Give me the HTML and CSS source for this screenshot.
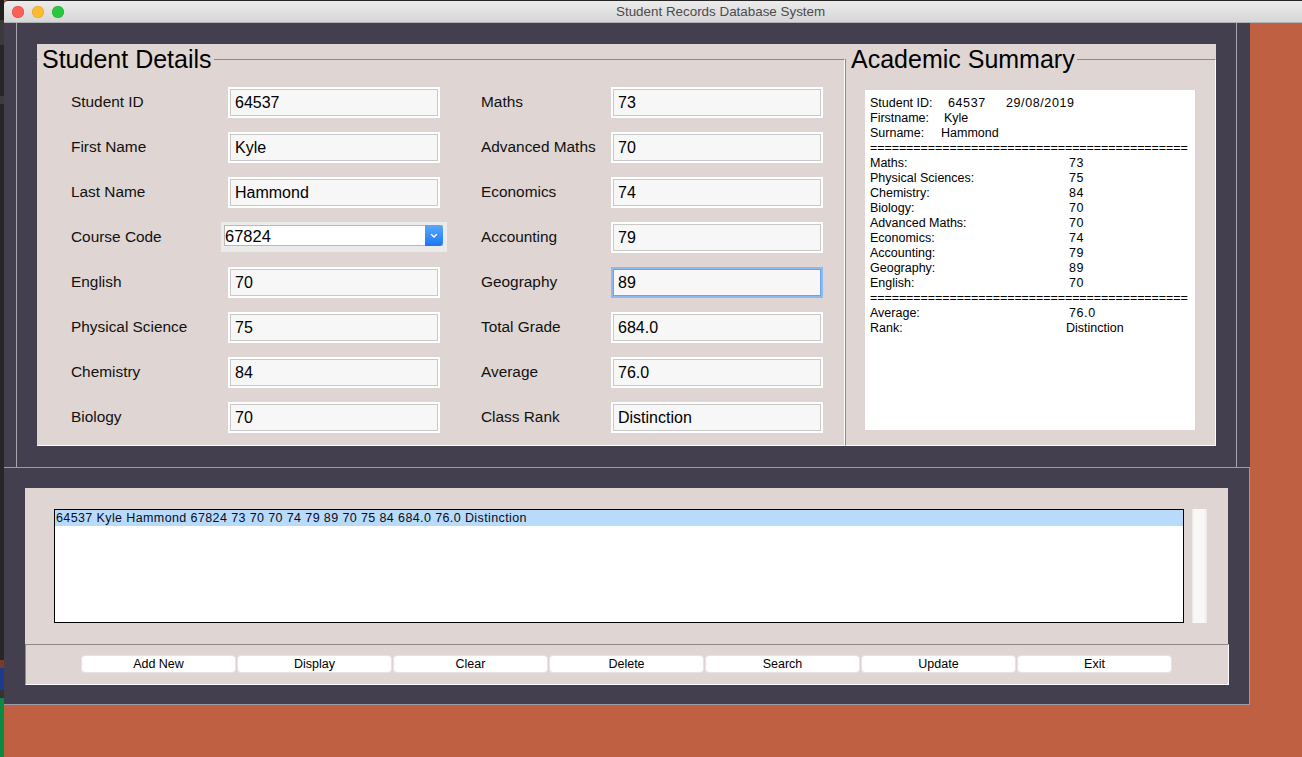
FILE: index.html
```html
<!DOCTYPE html>
<html>
<head>
<meta charset="utf-8">
<title>Student Records Database System</title>
<link rel="stylesheet" href="styles.css">
</head>
<body>
<div class="screen">
  <div class="desk-strip"></div>
  <div class="app">
    <div class="titlebar">
      <div class="lights">
        <span class="light red"></span>
        <span class="light yellow"></span>
        <span class="light green"></span>
      </div>
      <div class="title">Student Records Database System</div>
    </div>
    <div class="root">
      <div class="main">
        <div class="top-frame">
          <div class="top-panel">
            <fieldset class="lf details">
              <legend>Student Details</legend>
              <div class="form-grid">
                <div class="label">Student ID</div>
                <div class="entry">64537</div>
                <div class="label r-label">Maths</div>
                <div class="entry">73</div>

                <div class="label">First Name</div>
                <div class="entry">Kyle</div>
                <div class="label r-label">Advanced Maths</div>
                <div class="entry">70</div>

                <div class="label">Last Name</div>
                <div class="entry">Hammond</div>
                <div class="label r-label">Economics</div>
                <div class="entry">74</div>

                <div class="label">Course Code</div>
                <div class="combo">
                  <div class="combo-field">
                    <span class="combo-text">67824</span>
                    <span class="combo-btn"><svg width="10" height="8" viewBox="0 0 10 8"><polyline points="2.5,2.5 5,5 7.5,2.5" fill="none" stroke="#fff" stroke-width="1.4" stroke-linecap="round" stroke-linejoin="round"/></svg></span>
                  </div>
                </div>
                <div class="label r-label">Accounting</div>
                <div class="entry">79</div>

                <div class="label">English</div>
                <div class="entry">70</div>
                <div class="label r-label">Geography</div>
                <div class="entry focus">89</div>

                <div class="label">Physical Science</div>
                <div class="entry">75</div>
                <div class="label r-label">Total Grade</div>
                <div class="entry">684.0</div>

                <div class="label">Chemistry</div>
                <div class="entry">84</div>
                <div class="label r-label">Average</div>
                <div class="entry">76.0</div>

                <div class="label">Biology</div>
                <div class="entry">70</div>
                <div class="label r-label">Class Rank</div>
                <div class="entry">Distinction</div>
              </div>
            </fieldset>
            <fieldset class="lf summary">
              <legend>Academic Summary</legend>
              <div class="summary-box">
                <div class="s-line"><span class="k-id">Student ID:</span><span class="k-mid num">64537</span><span class="num">29/08/2019</span></div>
                <div class="s-line"><span class="k-fn">Firstname:</span>Kyle</div>
                <div class="s-line"><span class="k-sn">Surname:</span>Hammond</div>
                <div class="s-sep">============================================</div>
                <div class="s-row"><span class="s-k">Maths:</span><span class="num">73</span></div>
                <div class="s-row"><span class="s-k">Physical Sciences:</span><span class="num">75</span></div>
                <div class="s-row"><span class="s-k">Chemistry:</span><span class="num">84</span></div>
                <div class="s-row"><span class="s-k">Biology:</span><span class="num">70</span></div>
                <div class="s-row"><span class="s-k">Advanced Maths:</span><span class="num">70</span></div>
                <div class="s-row"><span class="s-k">Economics:</span><span class="num">74</span></div>
                <div class="s-row"><span class="s-k">Accounting:</span><span class="num">79</span></div>
                <div class="s-row"><span class="s-k">Geography:</span><span class="num">89</span></div>
                <div class="s-row"><span class="s-k">English:</span><span class="num">70</span></div>
                <div class="s-sep">============================================</div>
                <div class="s-row"><span class="s-k">Average:</span><span class="num">76.0</span></div>
                <div class="s-row"><span class="s-k">Rank:</span><span class="s-shift">Distinction</span></div>
              </div>
            </fieldset>
          </div>
        </div>
        <div class="bottom-frame">
          <div class="list-panel">
            <div class="listbox">
              <div class="list-row selected">64537 Kyle Hammond 67824 73 70 70 74 79 89 70 75 84 684.0 76.0 Distinction</div>
            </div>
            <div class="scrollbar"></div>
          </div>
          <div class="button-bar">
            <button class="btn">Add New</button>
            <button class="btn">Display</button>
            <button class="btn">Clear</button>
            <button class="btn">Delete</button>
            <button class="btn">Search</button>
            <button class="btn">Update</button>
            <button class="btn">Exit</button>
          </div>
        </div>
      </div>
    </div>
  </div>
</div>
</body>
</html>
```

FILE: styles.css
```css
* { box-sizing: border-box; }

html, body {
  margin: 0;
  padding: 0;
}

body {
  width: 1302px;
  height: 757px;
  overflow: hidden;
  background: #c06042;
  font-family: "Liberation Sans", Arial, Helvetica, sans-serif;
  color: #000;
}

.screen {
  display: flex;
  height: 757px;
}

.desk-strip {
  width: 4px;
  flex: none;
  background: linear-gradient(to bottom,
    #1f1f1f 0, #1f1f1f 20px,
    #3a3a3a 20px, #3a3a3a 45px,
    #262626 45px, #262626 96px,
    #3c3c3c 96px, #3c3c3c 104px,
    #262626 104px, #262626 660px,
    #7a3b2a 660px, #7a3b2a 668px,
    #1d3a8c 668px, #1d3a8c 690px,
    #333 690px, #333 698px,
    #0b8a43 698px, #0b8a43 757px);
}

.app {
  flex: 1;
  display: flex;
  flex-direction: column;
  min-width: 0;
}

/* ---------- title bar ---------- */
.titlebar {
  height: 23px;
  flex: none;
  display: flex;
  align-items: center;
  border-top: 1px solid #262626;
  border-bottom: 1px solid #b2b2b2;
  border-top-left-radius: 4px;
  background: linear-gradient(#ececec, #d6d6d6);
}

.lights {
  display: flex;
  gap: 8px;
  padding-left: 8px;
}

.light {
  width: 12px;
  height: 12px;
  border-radius: 50%;
}
.light.red { background: #fc5f57; box-shadow: inset 0 0 0 0.5px #df4744; }
.light.yellow { background: #fdbc2e; box-shadow: inset 0 0 0 0.5px #de9f34; }
.light.green { background: #29c73f; box-shadow: inset 0 0 0 0.5px #27aa35; }

.title {
  margin-left: 552px;
  font-size: 13.4px;
  color: #4b4b4b;
  white-space: nowrap;
}

/* ---------- main window ---------- */
.root {
  flex: 1;
  background: #c06042;
}

.main {
  width: 1246px;
  height: 682px;
  background: #433f4e;
  display: flex;
  flex-direction: column;
}

.top-frame {
  flex: none;
  margin-left: 12px;
  width: 1221px;
  height: 444px;
  border-left: 1px solid #a9a5af;
  border-right: 1px solid #a9a5af;
  padding: 21px 20px 0 20px;
}

.top-panel {
  width: 1179px;
  height: 402px;
  background: #dfd6d3;
  display: flex;
}

.lf {
  margin: 0;
  padding: 0;
  border: 1px solid;
  border-color: #8e8986 #ffffff #ffffff #8e8986;
  min-width: 0;
}

.lf legend {
  font-size: 25px;
  line-height: 30px;
  padding: 0 2px 0 4px;
  color: #000;
}

.details {
  width: 808px;
  border-left-color: #dfd6d3;
}

.summary {
  flex: 1;
}

.summary legend {
  padding-left: 5px;
}

/* ---------- form ---------- */
.form-grid {
  margin: 13px 0 0 33px;
  display: grid;
  grid-template-columns: 157px 212px 171px 212px;
  grid-auto-rows: 31px;
  row-gap: 14px;
  align-items: center;
}

.label {
  font-size: 15.4px;
  color: #111;
  white-space: nowrap;
  margin-top: -2px;
}

.r-label {
  padding-left: 41px;
}

.entry {
  height: 31px;
  background: #f7f7f7;
  border: 2px solid #fff;
  box-shadow: inset 0 0 0 1px #c9c9c9;
  padding-left: 5px;
  font-size: 16px;
  line-height: 27px;
  white-space: nowrap;
}

.entry.focus {
  border-color: #8db8f2;
  box-shadow: inset 0 0 0 1px #6fa2ea;
}

.combo {
  align-self: start;
  margin-left: -7px;
  width: 226px;
  height: 30px;
  background: #ebebeb;
  padding: 3px 4px 6px 3px;
}

.combo-field {
  height: 21px;
  background: #fff;
  border: 1px solid #b9b9b9;
  display: flex;
}

.combo-text {
  flex: 1;
  font-size: 16.5px;
  line-height: 17px;
  padding-top: 2px;
}

.combo-btn {
  width: 18px;
  margin: -1px -1px -1px 0;
  border-radius: 0 4px 4px 0;
  background: linear-gradient(#5aa8fd, #1b76f3);
  display: flex;
  align-items: center;
  justify-content: center;
}

.combo-btn svg { display: block; }

/* ---------- summary ---------- */
.summary-box {
  margin: 16px 0 0 19px;
  width: 330px;
  height: 340px;
  background: #fff;
  padding: 6px 0 0 5px;
  font-size: 12.5px;
  line-height: 15px;
  white-space: nowrap;
}

.k-id, .k-mid, .k-fn, .k-sn, .s-k {
  display: inline-block;
}
.k-id { width: 78px; }
.k-mid { width: 58px; }
.k-fn { width: 74px; }
.k-sn { width: 71px; }
.s-k { width: 199px; }

.num {
  letter-spacing: 0.6px;
}

.s-shift {
  margin-left: -3px;
}

.s-sep {
  letter-spacing: -0.08px;
  overflow: hidden;
}

/* ---------- bottom ---------- */
.bottom-frame {
  flex: none;
  height: 238px;
  border-top: 1px solid #9e9aa5;
  border-right: 1px solid #9e9aa5;
  border-bottom: 1px solid #9e9aa5;
  padding: 20px 0 0 21px;
}

.list-panel {
  width: 1203px;
  height: 156px;
  background: #dfd6d3;
  display: flex;
  gap: 8px;
  padding: 21px 0 0 29px;
}

.listbox {
  width: 1130px;
  height: 114px;
  background: #fff;
  border: 1px solid #000;
}

.list-row {
  height: 16px;
  line-height: 16px;
  font-size: 12.5px;
  letter-spacing: 0.39px;
  padding-left: 1px;
  white-space: nowrap;
  color: #0a0a1a;
}

.list-row.selected {
  background: #b9dbfb;
}

.scrollbar {
  width: 15px;
  height: 114px;
  background: linear-gradient(to right, #e6e6e6 0, #f8f8f8 2px, #f8f8f8 12px, #e9e9e9 15px);
}

.button-bar {
  width: 1204px;
  height: 41px;
  background: #dfd6d3;
  border: 1px solid;
  border-color: #8e8986 #ffffff #ffffff #8e8986;
  display: flex;
  gap: 1px;
  padding: 10px 0 0 55px;
}

.btn {
  width: 155px;
  height: 18px;
  margin: 0;
  padding: 0;
  background: #fff;
  border: 1px solid #e3e3e3;
  border-radius: 4px;
  font-family: "Liberation Sans", Arial, Helvetica, sans-serif;
  font-size: 12.5px;
  line-height: 16px;
  color: #000;
  text-align: center;
}
```
